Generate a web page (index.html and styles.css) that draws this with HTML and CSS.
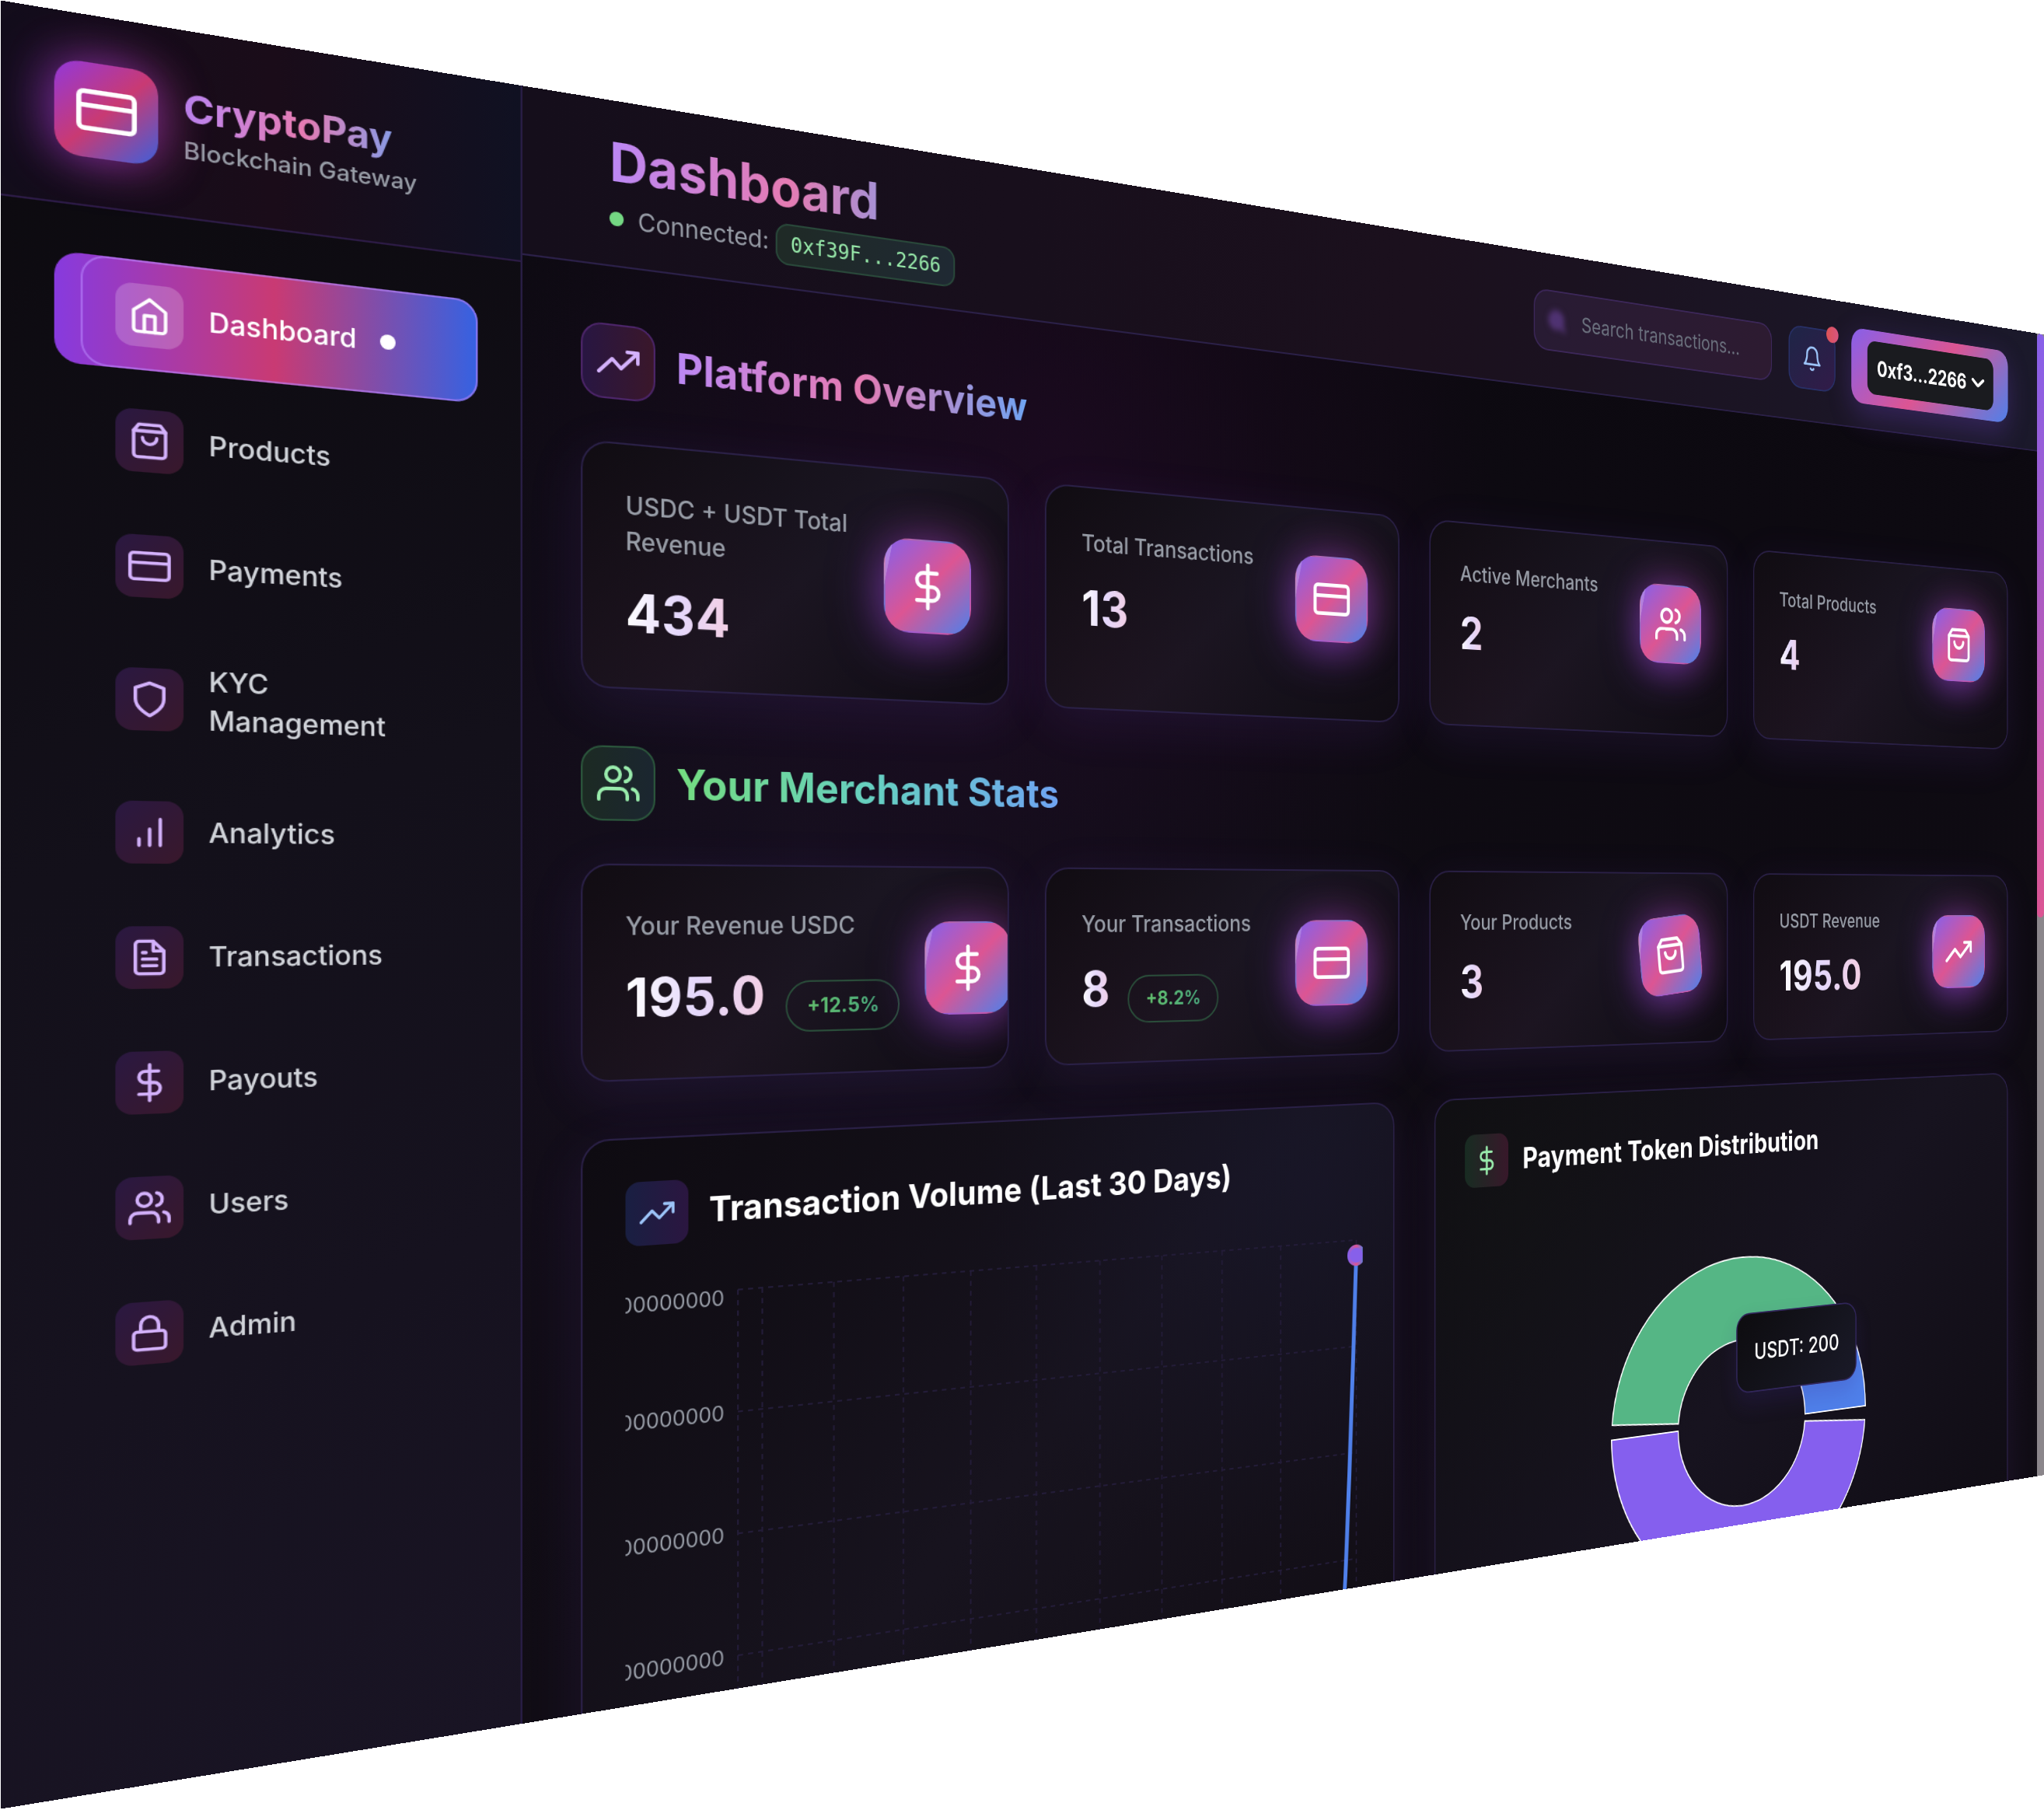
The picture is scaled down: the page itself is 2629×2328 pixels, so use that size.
FILE: index.html
```html
<!DOCTYPE html>
<html lang="en">
<head>
<meta charset="utf-8">
<title>CryptoPay Dashboard</title>
<link rel="stylesheet" href="styles.css">
</head>
<body>
<svg class="sprite" aria-hidden="true">
  <symbol id="home" viewBox="0 0 24 24"><path d="M3 9l9-7 9 7v11a2 2 0 0 1-2 2H5a2 2 0 0 1-2-2z"/><path d="M9 22V12h6v10"/></symbol>
  <symbol id="bag" viewBox="0 0 24 24"><path d="M6 2L3 6v14a2 2 0 0 0 2 2h14a2 2 0 0 0 2-2V6l-3-4z"/><path d="M3 6h18"/><path d="M16 10a4 4 0 0 1-8 0"/></symbol>
  <symbol id="card" viewBox="0 0 24 24"><rect x="1" y="4" width="22" height="16" rx="2"/><path d="M1 10h22"/></symbol>
  <symbol id="shield" viewBox="0 0 24 24"><path d="M12 22s8-4 8-10V5l-8-3-8 3v7c0 6 8 10 8 10z"/></symbol>
  <symbol id="bars" viewBox="0 0 24 24"><path d="M12 20V10M18 20V4M6 20v-4"/></symbol>
  <symbol id="file" viewBox="0 0 24 24"><path d="M14 2H6a2 2 0 0 0-2 2v16a2 2 0 0 0 2 2h12a2 2 0 0 0 2-2V8z"/><path d="M14 2v6h6M16 13H8M16 17H8M10 9H8"/></symbol>
  <symbol id="dollar" viewBox="0 0 24 24"><path d="M12 1v22"/><path d="M17 5H9.5a3.5 3.5 0 0 0 0 7h5a3.5 3.5 0 0 1 0 7H6"/></symbol>
  <symbol id="users" viewBox="0 0 24 24"><path d="M17 21v-2a4 4 0 0 0-4-4H5a4 4 0 0 0-4 4v2"/><circle cx="9" cy="7" r="4"/><path d="M23 21v-2a4 4 0 0 0-3-3.87M16 3.13a4 4 0 0 1 0 7.75"/></symbol>
  <symbol id="lock" viewBox="0 0 24 24"><rect x="3" y="11" width="18" height="11" rx="2"/><path d="M7 11V7a5 5 0 0 1 10 0v4"/></symbol>
  <symbol id="trend" viewBox="0 0 24 24"><path d="M23 6l-9.5 9.5-5-5L1 18"/><path d="M17 6h6v6"/></symbol>
  <symbol id="bell" viewBox="0 0 24 24"><path d="M18 8A6 6 0 0 0 6 8c0 7-3 9-3 9h18s-3-2-3-9"/><path d="M13.73 21a2 2 0 0 1-3.46 0"/></symbol>
  <symbol id="search" viewBox="0 0 24 24"><circle cx="11" cy="11" r="8"/><path d="M21 21l-4.35-4.35"/></symbol>
</svg>

<div class="stage">
<div class="screen">
  <aside class="sidebar">
    <div class="brand">
      <div class="logo"><svg class="icon icon-28"><use href="#card"/></svg></div>
      <div>
        <div class="brand-name">CryptoPay</div>
        <div class="brand-sub">Blockchain Gateway</div>
      </div>
    </div>
    <nav class="nav">
      <a class="nav-item active"><span class="nav-icon"><svg class="icon icon-20"><use href="#home"/></svg></span><span>Dashboard</span><i class="nav-dot"></i></a>
      <a class="nav-item"><span class="nav-icon"><svg class="icon icon-20"><use href="#bag"/></svg></span><span>Products</span></a>
      <a class="nav-item"><span class="nav-icon"><svg class="icon icon-20"><use href="#card"/></svg></span><span>Payments</span></a>
      <a class="nav-item"><span class="nav-icon"><svg class="icon icon-20"><use href="#shield"/></svg></span><span>KYC<br>Management</span></a>
      <a class="nav-item"><span class="nav-icon"><svg class="icon icon-20"><use href="#bars"/></svg></span><span>Analytics</span></a>
      <a class="nav-item"><span class="nav-icon"><svg class="icon icon-20"><use href="#file"/></svg></span><span>Transactions</span></a>
      <a class="nav-item"><span class="nav-icon"><svg class="icon icon-20"><use href="#dollar"/></svg></span><span>Payouts</span></a>
      <a class="nav-item"><span class="nav-icon"><svg class="icon icon-20"><use href="#users"/></svg></span><span>Users</span></a>
      <a class="nav-item"><span class="nav-icon"><svg class="icon icon-20"><use href="#lock"/></svg></span><span>Admin</span></a>
    </nav>
  </aside>

  <div class="main">
    <header class="topbar">
      <div class="heading">
        <h1>Dashboard</h1>
        <div class="status"><i class="status-dot"></i><span>Connected: <code>0xf39F...2266</code></span></div>
      </div>
      <div class="tools">
        <div class="search"><svg class="icon icon-16"><use href="#search"/></svg><span>Search transactions...</span></div>
        <div class="bell"><svg class="icon icon-20"><use href="#bell"/></svg><i class="bell-dot"></i></div>
        <div class="wallet"><div class="wallet-inner">0xf3...2266<svg class="chevron" viewBox="0 0 14 7"><path d="M1.5 1.2l4.6 3.9a1.4 1.4 0 0 0 1.8 0l4.6-3.9"/></svg></div></div>
      </div>
    </header>

    <div class="content">
      <div class="section-head">
        <div class="section-icon"><svg class="icon icon-24"><use href="#trend"/></svg></div>
        <h2>Platform Overview</h2>
      </div>
      <div class="stats">
        <div class="card"><div class="stat"><div><p>USDC + USDT Total Revenue</p><div class="row"><b>434</b></div></div><div class="tile"><svg class="icon icon-28"><use href="#dollar"/></svg></div></div></div>
        <div class="card"><div class="stat"><div><p>Total Transactions</p><div class="row"><b>13</b></div></div><div class="tile"><svg class="icon icon-28"><use href="#card"/></svg></div></div></div>
        <div class="card"><div class="stat"><div><p>Active Merchants</p><div class="row"><b>2</b></div></div><div class="tile"><svg class="icon icon-28"><use href="#users"/></svg></div></div></div>
        <div class="card"><div class="stat"><div><p>Total Products</p><div class="row"><b>4</b></div></div><div class="tile"><svg class="icon icon-28"><use href="#bag"/></svg></div></div></div>
      </div>

      <div class="section-head">
        <div class="section-icon green"><svg class="icon icon-24"><use href="#users"/></svg></div>
        <h2 class="green">Your Merchant Stats</h2>
      </div>
      <div class="stats">
        <div class="card"><div class="stat"><div><p>Your Revenue USDC</p><div class="row"><b>195.0</b><span class="delta"><span>+12.5%</span></span></div></div><div class="tile"><svg class="icon icon-28"><use href="#dollar"/></svg></div></div></div>
        <div class="card"><div class="stat"><div><p>Your Transactions</p><div class="row"><b>8</b><span class="delta"><span>+8.2%</span></span></div></div><div class="tile"><svg class="icon icon-28"><use href="#card"/></svg></div></div></div>
        <div class="card"><div class="stat"><div><p>Your Products</p><div class="row"><b>3</b></div></div><div class="tile tilted"><svg class="icon icon-28"><use href="#bag"/></svg></div></div></div>
        <div class="card"><div class="stat"><div><p>USDT Revenue</p><div class="row"><b>195.0</b></div></div><div class="tile"><svg class="icon icon-28"><use href="#trend"/></svg></div></div></div>
      </div>

      <div class="charts">
        <div class="card chart-card volume">
          <div class="chart-head"><div class="chart-icon blue"><svg class="icon icon-20"><use href="#trend"/></svg></div><h3>Transaction Volume (Last 30 Days)</h3></div>
          <svg class="chart" viewBox="0 0 490 320">
            <defs><linearGradient id="dotRing"><stop offset="0" stop-color="#8760ea"/><stop offset=".5" stop-color="#dc5593"/><stop offset="1" stop-color="#4f80ea"/></linearGradient></defs>
            <g class="grid">
              <path d="M65 5H485M65 75H485M65 145H485M65 215H485M65 285H485"/>
              <path d="M65 5V285M79.5 5V285M122.9 5V285M166.4 5V285M209.8 5V285M253.3 5V285M296.7 5V285M340.2 5V285M383.6 5V285M427.1 5V285M485 5V285"/>
            </g>
            <g class="axis">
              <text x="57" y="13.3">16000000000</text>
              <text x="57" y="79.3">12000000000</text>
              <text x="57" y="149.3">8000000000</text>
              <text x="57" y="219.3">4000000000</text>
            </g>
            <path class="series" d="M470.5 285C475.3 285 480.2 150 485 15"/>
            <circle class="series-dot" cx="485" cy="15" r="6"/>
          </svg>
        </div>
        <div class="card chart-card tokens">
          <div class="chart-head"><div class="chart-icon mint"><svg class="icon icon-20"><use href="#dollar"/></svg></div><h3>Payment Token Distribution</h3></div>
          <div class="pie">
            <svg class="chart" viewBox="0 0 490 320">
              <g class="slices">
                <path class="s-blue" d="M365 160A120 120 0 0 0 345.6 94.6L295.3 127.3A60 60 0 0 1 305 160Z"/>
                <path class="s-green" d="M339.6 86.1A120 120 0 0 0 125.5 149.5L185.2 154.8A60 60 0 0 1 292.3 123.1Z"/>
                <path class="s-purple" d="M125 160A120 120 0 0 0 364.5 170.5L304.8 165.2A60 60 0 0 1 185 160Z"/>
              </g>
            </svg>
            <div class="tooltip">USDT: 200</div>
          </div>
        </div>
      </div>
    </div>
  </div>
  <div class="scrollbar"><div class="thumb"></div></div>
</div>
</div>
</body>
</html>
```
FILE: styles.css
```css
* { box-sizing: border-box; }

html, body { margin: 0; padding: 0; background: #fff; }

html { overflow: hidden; }

body {
  width: 2629px;
  height: 2328px;
  overflow: hidden;
  font-family: Inter, "Liberation Sans", sans-serif;
}

h1, h2, h3, p { margin: 0; }

.sprite { display: none; }

.icon {
  display: block;
  flex: none;
  fill: none;
  stroke: currentColor;
  stroke-width: 2;
  stroke-linecap: round;
  stroke-linejoin: round;
}
.icon-16 { width: 16px; height: 16px; }
.icon-20 { width: 20px; height: 20px; }
.icon-24 { width: 24px; height: 24px; }
.icon-28 { width: 28px; height: 28px; }

/* The stage turns the double-density dashboard away to the right */
.stage {
  width: 2880px;
  height: 1800px;
  overflow: hidden;
  transform-origin: 0 0;
  transform: matrix3d(1.447105, .23668, 0, .000203335, 0, 1.2922, 0, 0, 0, 0, 1, 0, 1, .6, 0, 1);
}

/* 1440x900 dashboard */
.screen {
  display: flex;
  position: relative;
  width: 1440px;
  height: 900px;
  overflow: hidden;
  zoom: 2;
  color: #fff;
  background:
    radial-gradient(circle at 580px 170px, rgba(56, 8, 58, .27), transparent 330px),
    radial-gradient(circle at 420px 420px, rgba(34, 22, 52, .35), transparent 420px),
    linear-gradient(#0c0910, #110d15);
}

/* Sidebar */
.sidebar {
  flex: none;
  width: 256px;
  height: 900px;
  border-right: 1px solid #291e46;
  background: linear-gradient(160deg, #0b090d 0%, #13101a 45%, #191424 100%);
}
.brand {
  display: flex;
  align-items: center;
  gap: 12px;
  height: 97px;
  padding: 0 24px;
  border-bottom: 1px solid #2c1b45;
  background: linear-gradient(90deg, #130d1b, #1a0c19 50%, #101122);
}
.logo {
  position: relative;
  display: flex;
  align-items: center;
  justify-content: center;
  width: 48px;
  height: 48px;
  border-radius: 12px;
  background: linear-gradient(135deg, #9138dc, #c93a73 50%, #3c60dc);
  box-shadow: -3px 0 24px rgba(139, 51, 220, .6), 3px 0 24px rgba(201, 58, 115, .45);
}
.brand-name {
  font-size: 20px;
  line-height: 28px;
  font-weight: 700;
  color: transparent;
  background: linear-gradient(90deg, #bb88f5, #e57bb2 50%, #6fa4f3);
  -webkit-background-clip: text;
  background-clip: text;
}
.brand-sub { font-size: 12px; line-height: 16px; font-weight: 500; color: #979ca6; }

.nav { display: flex; flex-direction: column; gap: 8px; padding: 24px 23px 0 36px; }
.nav-item {
  position: relative;
  display: flex;
  align-items: center;
  gap: 12px;
  padding: 12px 16px;
  border-radius: 12px;
  font-size: 14px;
  line-height: 20px;
  font-weight: 500;
  color: #d0d3d9;
}
.nav-icon {
  padding: 6px;
  border-radius: 8px;
  color: #d3b1fb;
  background: linear-gradient(135deg, #2a1841, #39182b);
}
.nav-item.active { color: #fff; }
.nav-item.active > * { position: relative; }
.nav-item.active .nav-icon { color: #fff; background: rgba(255, 255, 255, .2); }
.nav-item.active::before {
  content: "";
  position: absolute;
  inset: 0 0 0 -12px;
  border-radius: 12px;
  background: linear-gradient(90deg, #873ade, #c93a73 50%, #3562e2);
}
.nav-item.active::after {
  content: "";
  position: absolute;
  inset: 0;
  border: 1px solid rgba(184, 130, 250, .6);
  border-radius: 12px;
}
.nav-dot { width: 8px; height: 8px; border-radius: 50%; background: #fff; }

/* Top bar */
.main { flex: 1; min-width: 0; }
.topbar {
  display: flex;
  align-items: center;
  justify-content: space-between;
  width: 1176px;
  height: 93px;
  padding: 0 32px 0 48px;
  border-bottom: 1px solid #2b2048;
  background: linear-gradient(90deg, #150e1b, #1b101d 50%, #1b192b);
}
h1 {
  font-size: 30px;
  line-height: 36px;
  font-weight: 700;
  color: transparent;
  background: linear-gradient(90deg, #bb88f5, #e57bb2 50%, #6fa4f3);
  -webkit-background-clip: text;
  background-clip: text;
}
.status {
  display: flex;
  align-items: center;
  gap: 8px;
  height: 20px;
  margin-top: 4px;
  font-size: 14px;
  line-height: 20px;
  color: #979ca6;
}
.status-dot { width: 8px; height: 8px; border-radius: 50%; background: #74d783; }
code {
  padding: 4px 8px;
  border: 1px solid #29483a;
  border-radius: 8px;
  font-family: "DejaVu Sans Mono", monospace;
  font-size: 12px;
  line-height: 16px;
  color: #97e8a9;
  background: linear-gradient(90deg, #1f2a26, #1f2933);
}
.tools { display: flex; align-items: center; gap: 16px; }
.search {
  display: flex;
  align-items: center;
  gap: 13px;
  width: 215.5px;
  height: 42px;
  padding-left: 11px;
  border: 1px solid #3c2759;
  border-radius: 12px;
  font-size: 14px;
  color: #6c727f;
  background: linear-gradient(90deg, #281b33, #2d1b31);
}
.search .icon { overflow: visible; color: #553579; filter: blur(2px); stroke-width: 4; fill: #4d3270; }
.bell {
  position: relative;
  padding: 12px;
  border: 1px solid #283067;
  border-radius: 12px;
  color: #9cc4f8;
  background: linear-gradient(135deg, #1e2547, #321b48);
}
.bell-dot {
  position: absolute;
  top: -4px;
  right: -4px;
  width: 12px;
  height: 12px;
  border-radius: 50%;
  background: linear-gradient(90deg, #dd5355, #d95580);
}
.wallet {
  padding: 8px 16px;
  border-radius: 12px;
  background: linear-gradient(135deg, #8760ea, #dc5593 50%, #4f80ea);
  box-shadow: 0 8px 24px rgba(115, 70, 210, .3);
}
.wallet-inner {
  display: flex;
  align-items: center;
  justify-content: center;
  gap: 5px;
  width: 132px;
  height: 40px;
  border-radius: 8px;
  font-size: 16px;
  font-weight: 700;
  background: #1a1b1f;
}
.chevron { width: 14px; height: 7px; fill: none; stroke: #fff; stroke-width: 2.4; stroke-linecap: round; }

/* Content */
.content { width: 1176px; padding: 32px; }
.section-head { display: flex; align-items: center; gap: 12px; height: 42px; margin-bottom: 24px; }
.section-icon {
  padding: 8px;
  border: 1px solid #4c2569;
  border-radius: 12px;
  color: #d3b1fb;
  background: linear-gradient(90deg, #281642, #3a172a);
}
.section-icon.green {
  border-color: #2b563c;
  color: #99ecac;
  background: linear-gradient(90deg, #1c2a23, #1b2630);
}
h2 {
  font-size: 24px;
  line-height: 32px;
  font-weight: 700;
  letter-spacing: .04px;
  color: transparent;
  background: linear-gradient(90deg, #bb88f5, #e57bb2 50%, #6fa4f3);
  -webkit-background-clip: text;
  background-clip: text;
}
h2.green {
  background: linear-gradient(90deg, #74dc80, #66cfc2 50%, #6fa4f3);
  -webkit-background-clip: text;
  background-clip: text;
}
.stats { display: grid; grid-template-columns: repeat(4, 260px); gap: 24px; margin-bottom: 32px; }
.card {
  padding: 24px;
  overflow: hidden;
  border: 1px solid #2a2046;
  border-radius: 16px;
  background:
    radial-gradient(circle at 15% 85%, rgba(60, 15, 30, .1), transparent 50%),
    linear-gradient(135deg, #100c12 0%, #1a1521 50%, #100c13 100%);
  box-shadow: 0 8px 32px rgba(130, 75, 220, .11);
}
.stat { display: flex; align-items: center; justify-content: space-between; }
.stat p { margin-bottom: 12px; font-size: 14px; line-height: 20px; font-weight: 500; color: #979ca6; }
.row { display: flex; align-items: baseline; gap: 12px; }
.row b {
  font-size: 30px;
  line-height: 36px;
  font-weight: 700;
  letter-spacing: .25px;
  color: transparent;
  background: linear-gradient(90deg, #fff, #e4d7fb 50%, #f3cfe4);
  -webkit-background-clip: text;
  background-clip: text;
}
.delta {
  padding: 6px 12px;
  border: 1px solid #2a4d3a;
  border-radius: 15px;
  font-size: 12px;
  line-height: 16px;
  font-weight: 700;
}
.delta span {
  color: transparent;
  background: linear-gradient(90deg, #62bf6d, #4aa87c);
  -webkit-background-clip: text;
  background-clip: text;
}
.tile {
  position: relative;
  flex: none;
  width: 56px;
  height: 56px;
  margin-left: 16px;
  padding: 13px;
  border: 1px solid transparent;
  border-radius: 16px;
  background: linear-gradient(135deg, #8760ea, #dc5593 50%, #4f80ea);
  box-shadow: -2px 5px 30px rgba(145, 70, 225, .62), 5px -2px 28px rgba(200, 60, 130, .25);
}
.tile::after {
  content: "";
  position: absolute;
  inset: -1px;
  border-radius: 16px;
  background: linear-gradient(102deg, rgba(255, 255, 255, .22) 5.9px, transparent 6.2px);
}
.tilted { transform: rotate(-6deg); }

/* Charts */
.charts { display: grid; grid-template-columns: 540px 540px; gap: 32px; }
.chart-card { height: 411px; }
.volume {
  background:
    radial-gradient(circle at 88% 12%, rgba(28, 30, 62, .28), transparent 40%),
    linear-gradient(135deg, #0e0b11 0%, #17131e 50%, #110d14 100%);
}
.tokens {
  background:
    radial-gradient(circle at 12% 18%, rgba(20, 28, 18, .22), transparent 40%),
    linear-gradient(135deg, #0f0d12 0%, #17131f 50%, #0f0c13 100%);
}
.chart-head { display: flex; align-items: center; gap: 12px; margin-bottom: 24px; }
.chart-icon { padding: 8px; border-radius: 8px; }
.chart-icon.blue { color: #9cc4f8; background: linear-gradient(90deg, #191f42, #2b1640); }
.chart-icon.mint { color: #99ecac; background: linear-gradient(90deg, #182c22, #38182a); }
h3 { font-size: 20px; line-height: 28px; font-weight: 700; letter-spacing: .035px; }
.chart { display: block; width: 490px; height: 320px; overflow: hidden; }
.grid path { fill: none; stroke: #231c38; stroke-dasharray: 3 3; }
.axis text { font-size: 12px; fill: #979ca6; text-anchor: end; }
.series { fill: none; stroke: #4f80ea; stroke-width: 3; }
.series-dot { fill: #8760ea; stroke: url(#dotRing); stroke-width: 2; }
.slices path { stroke: #fff; stroke-width: 1; }
.s-blue { fill: #4f80ea; }
.s-green { fill: #55b685; }
.s-purple { fill: #855fee; }
.pie { position: relative; }
.tooltip {
  position: absolute;
  left: 239px;
  top: 81px;
  width: 117px;
  height: 58px;
  padding: 16px;
  border: 1px solid #31265a;
  border-radius: 12px;
  font-size: 16px;
  line-height: 24px;
  font-weight: 500;
  white-space: nowrap;
  background: linear-gradient(135deg, #0d0c0f, #1a1a28);
  box-shadow: 0 8px 16px rgba(60, 40, 140, .2);
}

/* Page scrollbar */
.scrollbar { flex: none; width: 8px; height: 900px; background: #8b868b; }
.thumb { height: 460px; border-radius: 4px; background: linear-gradient(#8760ea, #dc5593); }
```
